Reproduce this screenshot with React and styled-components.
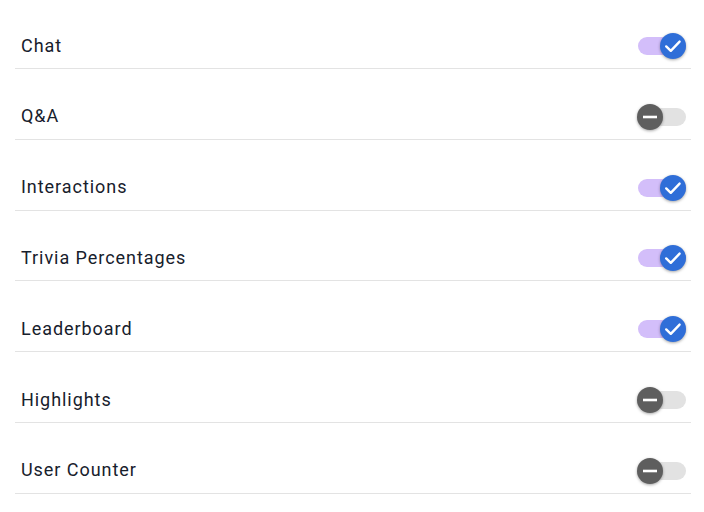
import React, { useState } from "react";
import styled, { createGlobalStyle } from "styled-components";

const Global = createGlobalStyle`
  html, body { margin: 0; padding: 0; background: #ffffff; }
  body { font-family: Roboto, "Noto Sans", Arial, sans-serif; }
`;

const List = styled.div`
  display: flex;
  flex-direction: column;
  gap: 25.83px;
  width: 676px;
  margin-left: 15px;
  padding-top: 24px;
`;

const Row = styled.div`
  display: flex;
  align-items: center;
  justify-content: space-between;
  height: 44px;
  padding: 0 5px 0 6px;
  border-bottom: 1px solid #e3e3e3;
`;

const Label = styled.span`
  font-size: 18px;
  color: #17202c;
  letter-spacing: 0.95px;
  margin-bottom: 2px;
`;

const Track = styled.button`
  position: relative;
  width: 48px;
  height: 18px;
  border: none;
  padding: 0;
  border-radius: 9px;
  background: ${(p) => (p.$on ? "#d3befa" : "#e2e2e2")};
  cursor: pointer;
`;

const Knob = styled.span`
  position: absolute;
  top: -4px;
  left: ${(p) => (p.$on ? "22px" : "-1px")};
  width: 26px;
  height: 26px;
  border-radius: 50%;
  background: ${(p) => (p.$on ? "#2f6ed8" : "#5e5e5e")};
  box-shadow: 0 1px 3px rgba(0, 0, 0, 0.35);
  display: flex;
  align-items: center;
  justify-content: center;
`;

function Toggle({ on, onClick }) {
  return (
    <Track $on={on} onClick={onClick} aria-pressed={on}>
      <Knob $on={on}>
        {on ? (
          <svg width="20" height="20" viewBox="0 0 20 20">
            <path d="M3.2 10.4 L7.8 14.8 L16.6 5.6" fill="none" stroke="#fff" strokeWidth="2.4" strokeLinecap="round" strokeLinejoin="round" />
          </svg>
        ) : (
          <svg width="20" height="20" viewBox="0 0 20 20">
            <path d="M3 10 H17" stroke="#fff" strokeWidth="2.6" strokeLinecap="butt" />
          </svg>
        )}
      </Knob>
    </Track>
  );
}

const initial = [
  ["Chat", true],
  ["Q&A", false],
  ["Interactions", true],
  ["Trivia Percentages", true],
  ["Leaderboard", true],
  ["Highlights", false],
  ["User Counter", false],
];

export default function App() {
  const [items, setItems] = useState(initial);
  return (
    <>
      <Global />
      <List>
        {items.map(([name, on], i) => (
          <Row key={name}>
            <Label>{name}</Label>
            <Toggle
              on={on}
              onClick={() =>
                setItems(items.map((it, j) => (j === i ? [it[0], !it[1]] : it)))
              }
            />
          </Row>
        ))}
      </List>
    </>
  );
}
